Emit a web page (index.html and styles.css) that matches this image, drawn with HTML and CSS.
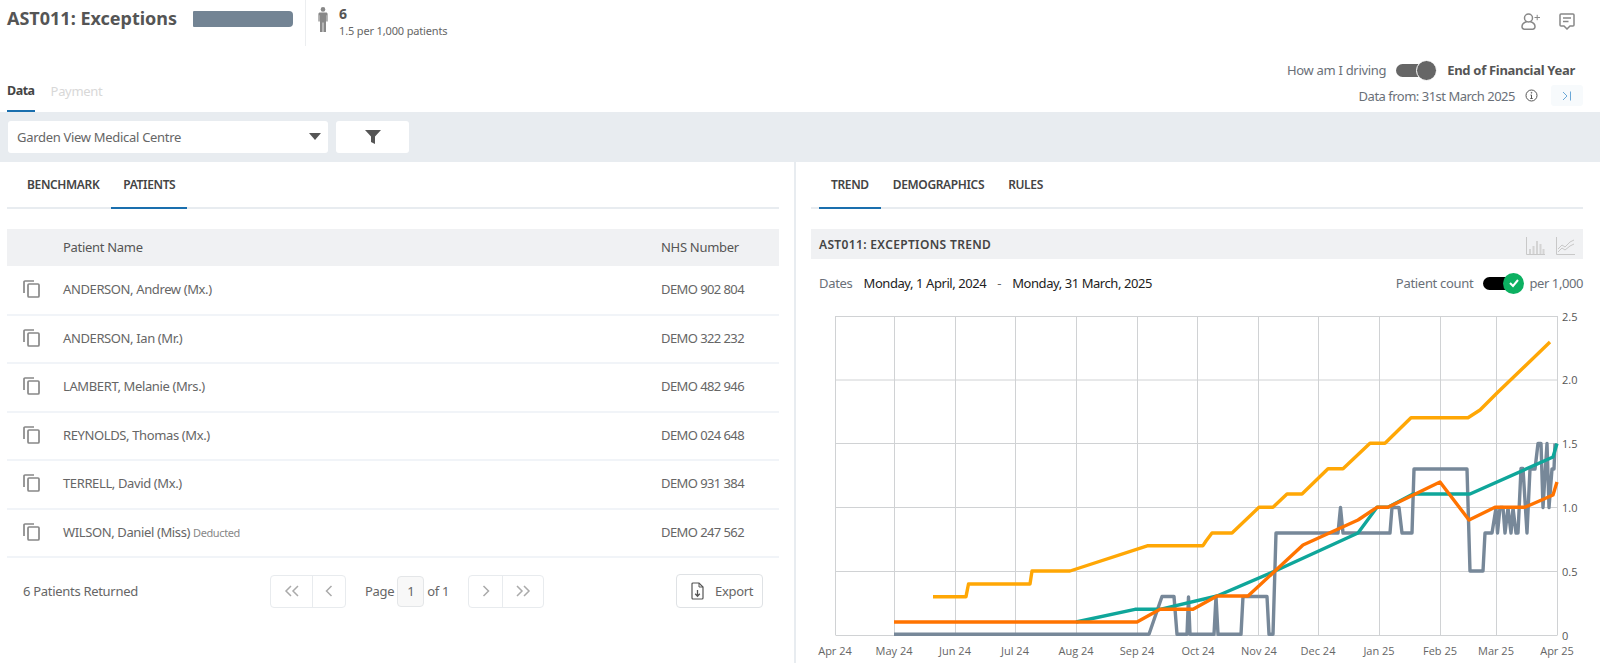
FILE: index.html
```html
<!DOCTYPE html>
<html lang="en">
<head>
<meta charset="utf-8">
<title>AST011: Exceptions</title>
<link rel="stylesheet" href="styles.css">
</head>
<body>
<header class="top">
  <div class="title-block">
    <h1 class="title">AST011: Exceptions</h1>
    <span class="redacted"></span>
  </div>
  <div class="count-block">
    <svg class="person" viewBox="0 0 10 25" width="10" height="25"><circle cx="5" cy="2.4" r="2.3"/><path d="M2 5.4h6c1 0 1.6.7 1.6 1.6v7.6H8.3V8.2H8V25H5.4V15.6H4.6V25H2V8.2h-.3v6.4H.4V7C.4 6.100 1 5.400 2 5.400z"/></svg>
    <div class="count-text">
      <strong class="count-num">6</strong>
      <span class="count-sub">1.5 per 1,000 patients</span>
    </div>
  </div>
  <div class="top-icons">
    <svg viewBox="0 0 20 17" width="20" height="17" class="ico-stroke"><circle cx="7.500" cy="5" r="4"/><path d="M6 8.500C2.500 9.500 1 11 1 13.500c0 2 1.500 2.800 3.500 2.800h6c2 0 3.500-.8 3.500-2.800 0-2.500-1.500-4-5-5"/><path d="M13.500 4.500h5.500M16.200 1.800v5.400" stroke-width="1"/></svg>
    <svg viewBox="0 0 16 17" width="16" height="17" class="ico-stroke"><path d="M2 1h12a1 1 0 0 1 1 1v10a1 1 0 0 1-1 1h-3l-3 3-3-3H2a1 1 0 0 1-1-1V2a1 1 0 0 1 1-1z"/><path d="M4 5h8M4 8.500h5.500"/></svg>
  </div>
</header>

<section class="subhead">
  <nav class="main-tabs">
    <a class="main-tab is-active">Data</a>
    <a class="main-tab is-muted">Payment</a>
  </nav>
  <div class="driving">
    <div class="driving-row">
      <span class="light">How am I driving</span>
      <span class="switch"><span class="switch-knob"></span></span>
      <strong class="driving-strong">End of Financial Year</strong>
    </div>
    <div class="data-row">
      <span class="light data-from">Data from: 31st March 2025</span>
      <svg viewBox="0 0 13 13" width="13" height="13" class="ico-info"><circle cx="6.500" cy="6.500" r="5.500"/><path d="M6.500 6v3.500M5.300 9.500h2.400M5.500 6h1" /><circle cx="6.500" cy="3.800" r=".4"/></svg>
      <span class="collapse-btn"><svg viewBox="0 0 10 10" width="10" height="10"><path d="M1 1l4 4-4 4M8.500 .5v9"/></svg></span>
    </div>
  </div>
</section>

<section class="filter-band">
  <div class="select">
    <span>Garden View Medical Centre</span>
    <span class="caret"></span>
  </div>
  <button class="filter-btn" type="button"><svg viewBox="0 0 16 14" width="16" height="14"><path d="M0 0h16l-6 6.500V14l-4-2V6.500z"/></svg></button>
</section>

<main class="panels">
  <section class="panel-left">
    <nav class="tabs">
      <a class="tab">BENCHMARK</a>
      <a class="tab is-active">PATIENTS</a>
    </nav>
    <table class="patients">
      <thead>
        <tr><th class="c-icon"></th><th class="c-name">Patient Name</th><th class="c-nhs">NHS Number</th></tr>
      </thead>
      <tbody>
        <tr><td><svg class="copy" viewBox="0 0 17 18" width="17" height="18"><rect x="5" y="4" width="11" height="13" rx="1"/><path d="M1 13V2a1 1 0 0 1 1-1h9"/></svg></td><td class="name">ANDERSON, Andrew (Mx.)</td><td class="nhs">DEMO 902 804</td></tr>
        <tr><td><svg class="copy" viewBox="0 0 17 18" width="17" height="18"><rect x="5" y="4" width="11" height="13" rx="1"/><path d="M1 13V2a1 1 0 0 1 1-1h9"/></svg></td><td class="name">ANDERSON, Ian (Mr.)</td><td class="nhs">DEMO 322 232</td></tr>
        <tr><td><svg class="copy" viewBox="0 0 17 18" width="17" height="18"><rect x="5" y="4" width="11" height="13" rx="1"/><path d="M1 13V2a1 1 0 0 1 1-1h9"/></svg></td><td class="name">LAMBERT, Melanie (Mrs.)</td><td class="nhs">DEMO 482 946</td></tr>
        <tr><td><svg class="copy" viewBox="0 0 17 18" width="17" height="18"><rect x="5" y="4" width="11" height="13" rx="1"/><path d="M1 13V2a1 1 0 0 1 1-1h9"/></svg></td><td class="name">REYNOLDS, Thomas (Mx.)</td><td class="nhs">DEMO 024 648</td></tr>
        <tr><td><svg class="copy" viewBox="0 0 17 18" width="17" height="18"><rect x="5" y="4" width="11" height="13" rx="1"/><path d="M1 13V2a1 1 0 0 1 1-1h9"/></svg></td><td class="name">TERRELL, David (Mx.)</td><td class="nhs">DEMO 931 384</td></tr>
        <tr><td><svg class="copy" viewBox="0 0 17 18" width="17" height="18"><rect x="5" y="4" width="11" height="13" rx="1"/><path d="M1 13V2a1 1 0 0 1 1-1h9"/></svg></td><td class="name">WILSON, Daniel (Miss) <small class="deducted">Deducted</small></td><td class="nhs">DEMO 247 562</td></tr>
      </tbody>
    </table>
    <footer class="table-foot">
      <span class="returned">6 Patients Returned</span>
      <div class="pager">
        <div class="pager-group">
          <span class="pg-btn pg-wide"><svg viewBox="0 0 16 12" width="16" height="12"><path d="M7 1L2 6l5 5M14 1L9 6l5 5"/></svg></span>
          <span class="pg-btn"><svg viewBox="0 0 8 12" width="8" height="12"><path d="M6.500 1L1.500 6l5 5"/></svg></span>
        </div>
        <span class="pg-label pg-label-l">Page</span>
        <span class="pg-input">1</span>
        <span class="pg-label pg-label-r">of 1</span>
        <div class="pager-group">
          <span class="pg-btn"><svg viewBox="0 0 8 12" width="8" height="12"><path d="M1.500 1l5 5-5 5"/></svg></span>
          <span class="pg-btn pg-wide"><svg viewBox="0 0 16 12" width="16" height="12"><path d="M2 1l5 5-5 5M9 1l5 5-5 5"/></svg></span>
        </div>
      </div>
      <button class="export" type="button">
        <svg viewBox="0 0 13 18" width="13" height="18"><path d="M2 1h6l4 4v11a1 1 0 0 1-1 1H2a1 1 0 0 1-1-1V2a1 1 0 0 1 1-1z"/><path d="M8 1v4h4" stroke-width="1"/><path d="M6.500 8v6M4.200 11.800l2.300 2.400 2.300-2.400" stroke-width="1.300"/></svg>
        <span>Export</span>
      </button>
    </footer>
  </section>

  <section class="panel-right">
    <nav class="tabs tabs-right">
      <a class="tab is-active">TREND</a>
      <a class="tab">DEMOGRAPHICS</a>
      <a class="tab">RULES</a>
    </nav>
    <div class="chart-head">
      <h2 class="chart-title">AST011: EXCEPTIONS TREND</h2>
      <div class="chart-icons">
        <svg viewBox="0 0 19 18" width="19" height="18"><path d="M.5 0v17.500H19" fill="none"/><path d="M3 17v-5h2v5zM6.500 17V9h2v8zM10 17V4h2v13zM13.500 17V7h2v10zM16.500 17v-5h2v5z" class="bars"/></svg>
        <svg viewBox="0 0 19 18" width="19" height="18"><path d="M.5 0v17.500H19M2 12l4-4 3 2 5-5 4-2M2 15l4-4 3 2 5-4 4-2" fill="none"/></svg>
      </div>
    </div>
    <div class="dates-row">
      <span class="dates-label">Dates</span>
      <span class="date">Monday, 1 April, 2024</span>
      <span class="date-sep">-</span>
      <span class="date">Monday, 31 March, 2025</span>
      <div class="count-toggle">
        <span class="light">Patient count</span>
        <span class="check-switch"><span class="check-knob"><svg viewBox="0 0 12 10" width="12" height="10"><path d="M2 5l3 3 5-6"/></svg></span></span>
        <span class="light per-label">per 1,000</span>
      </div>
    </div>
    <svg class="chart" viewBox="796 297 804 366" width="804" height="366">
      <g class="grid">
        <path d="M835.500 316.500H1557.500M835.500 380H1557.500M835.500 443.500H1557.500M835.500 507.500H1557.500M835.500 571.500H1557.500M835.500 635.500H1557.500"/>
        <path d="M835.500 316V635M894.500 316V635M955.500 316V635M1015.500 316V635M1076.500 316V635M1137.500 316V635M1197.500 316V635M1258.500 316V635M1318.500 316V635M1379.500 316V635M1440.500 316V635M1496.500 316V635M1557.500 316V635"/>
      </g>
      <g class="y-labels">
        <text x="1562" y="321">2.5</text>
        <text x="1562" y="384">2.0</text>
        <text x="1562" y="448">1.5</text>
        <text x="1562" y="512">1.0</text>
        <text x="1562" y="576">0.5</text>
        <text x="1562" y="640">0</text>
      </g>
      <g class="x-labels">
        <text x="835" y="655">Apr 24</text>
        <text x="894" y="655">May 24</text>
        <text x="955" y="655">Jun 24</text>
        <text x="1015" y="655">Jul 24</text>
        <text x="1076" y="655">Aug 24</text>
        <text x="1137" y="655">Sep 24</text>
        <text x="1198" y="655">Oct 24</text>
        <text x="1259" y="655">Nov 24</text>
        <text x="1318" y="655">Dec 24</text>
        <text x="1379" y="655">Jan 25</text>
        <text x="1440" y="655">Feb 25</text>
        <text x="1496" y="655">Mar 25</text>
        <text x="1557" y="655">Apr 25</text>
      </g>
      <polyline class="line line-yellow" points="933,596.700 966,596.700 968.500,584 1030,584 1032,571 1070,571 1148,545.700 1203,545.700 1206,541 1212,533 1232,533 1259,507.300 1273,507.300 1287,494 1302,494 1328,468.700 1343,468.700 1370,443.300 1385,443.300 1411,417.700 1468,417.700 1480,410 1497,393 1550,342"/>
      <polyline class="line line-grey" points="894,634.300 1149,634.300 1162,596.500 1174,596.500 1177,634.300 1187,634.300 1188.500,597 1190,634.300 1214,634.300 1216,596.500 1218,634.300 1241,634.300 1243,596.500 1267,596.500 1269,634.300 1273,634.300 1276,533 1338,533 1340.500,507.500 1343,533 1390,533 1392,507.500 1399,507.500 1402,533 1412,533 1414,469 1467,469 1470,571 1483,571 1485,533 1492,533 1496,508 1497.500,533 1500,507.500 1503,507.500 1505,533 1508,508 1511,533 1513,508 1516,533 1518,533 1521,468.500 1523,468.500 1527,533 1530,469 1535,469 1538,443.500 1541,443.500 1543,507.500 1547,443.500 1549,507.500 1552,469 1554,469 1555,443.500"/>
      <polyline class="line line-teal" points="1076,622 1135,609.300 1160,609.300 1217,596 1275,571 1358,533 1377,507.300 1388,507.300 1413,494 1470,494 1553,457 1557,443.500"/>
      <polyline class="line line-orange" points="894,622 1137,622 1160,609.300 1193,609.300 1217,596 1248,596 1275,571 1303,545 1358,520 1377,507.300 1388,507.300 1440,482 1469,520 1495,507.300 1525,507.300 1553,495 1557,482"/>
    </svg>
  </section>
</main>
</body>
</html>
```

FILE: styles.css
```css
* { box-sizing: border-box; }
html, body { margin: 0; height: 663px; overflow: hidden; }
body {
  font-family: "Noto Sans", "Liberation Sans", sans-serif;
  font-size: 13px;
  letter-spacing: -0.3px;
  color: #666;
  background: #fff;
}

/* top */
.top { display: flex; height: 46px; padding-left: 7px; }
.title-block { display: flex; align-items: flex-start; width: 299px; border-right: 1px solid #eceef0; }
.title { margin: 5px 0 0; font-size: 18px; line-height: 26px; font-weight: 700; color: #555; letter-spacing: 0; width: 186px; }
.redacted { width: 100px; height: 16px; margin-top: 11px; background: #738494; border-radius: 1px 4px 4px 1px; }
.count-block { display: flex; gap: 11px; padding: 7px 0 0 12px; }
.person { fill: #888; }
.count-text { display: flex; flex-direction: column; }
.count-num { font-size: 14px; line-height: 14px; color: #555; }
.count-sub { font-size: 11px; line-height: 14px; margin-top: 3px; letter-spacing: -0.15px; }
.top-icons { margin-left: auto; display: flex; gap: 18px; padding: 13px 25px 0 0; }
.ico-stroke { fill: none; stroke: #888; stroke-width: 1.500; }

/* sub head */
.subhead { display: flex; justify-content: space-between; height: 66px; padding: 0 17px 0 7px; }
.main-tabs { display: flex; gap: 16px; align-self: flex-end; }
.main-tab { font-size: 13px; line-height: 20px; height: 33px; padding-top: 2px; }
.main-tab.is-active { font-size: 12.500px; letter-spacing: -0.5px; font-weight: 700; color: #444; border-bottom: 2px solid #1a6fae; }
.main-tab.is-muted { color: #d8d8d8; }
.driving { display: flex; flex-direction: column; align-items: flex-end; }
.driving-row { display: flex; align-items: center; height: 20px; margin: 14px 8px 0 0; }
.light { color: #6a7078; }
.switch { position: relative; width: 30px; height: 13px; margin: 0 21px 0 10px; background: #666; border-radius: 7px; }
.switch-knob { position: absolute; right: -11px; top: -4px; width: 21px; height: 21px; border-radius: 50%; background: #666; border: 1px solid #fff; }
.driving-strong { color: #555; }
.data-row { display: flex; align-items: center; height: 21px; margin-top: 5px; }
.data-from { letter-spacing: -0.5px; }
.ico-info { margin-left: 10px; fill: none; stroke: #555; stroke-width: 1; }
.collapse-btn { display: flex; align-items: center; justify-content: center; width: 32px; height: 21px; margin-left: 13px; background: #f7fafc; border-radius: 3px; }
.collapse-btn svg { fill: none; stroke: #6ba8d8; stroke-width: 1; }

/* filter */
.filter-band { display: flex; gap: 8px; height: 50px; padding: 9px 0 0 8px; background: #e8ecf0; }
.select { display: flex; align-items: center; justify-content: space-between; width: 320px; height: 32px; padding: 0 7px 0 9px; background: #fff; border-radius: 3px; }
.caret { width: 0; height: 0; border-left: 6px solid transparent; border-right: 6px solid transparent; border-top: 7px solid #555; margin-top: -2px; }
.filter-btn { display: flex; align-items: center; justify-content: center; width: 73px; height: 32px; padding: 0; border: 0; background: #fff; border-radius: 3px; }
.filter-btn svg { fill: #555; }

/* panels */
.panels { display: grid; grid-template-columns: 794px minmax(0, 1fr); height: 501px; }
.panel-left { padding: 0 15px 0 7px; }
.panel-right { padding: 0 17px 0 15px; border-left: 2px solid #e8ecf0; }
.tabs { display: flex; height: 47px; border-bottom: 2px solid #e8ecf0; padding-left: 8px; }
.tab { height: 47px; padding: 13px 12px 0; font-size: 12px; line-height: 20px; font-weight: 600; color: #444; letter-spacing: -0.36px; }
.tab.is-active { border-bottom: 2px solid #1a6fae; }

/* table */
.patients { width: 100%; margin-top: 20px; border-collapse: collapse; table-layout: fixed; }
.patients th { height: 37px; padding: 0 0 2px; text-align: left; font-weight: 400; color: #555; background: #f0f1f3; }
.patients td { height: 48.500px; padding: 0 0 2px; border-bottom: 2px solid #f1f4f8; }
.c-icon { width: 56px; }
.c-nhs { width: 118px; }
.name { letter-spacing: -0.38px; }
.nhs { letter-spacing: -0.58px; }
.copy { display: block; margin-left: 16px; fill: none; stroke: #888; stroke-width: 1.700; }
.deducted { font-size: 11px; color: #888; }
.table-foot { display: grid; grid-template-columns: 247px 1fr auto; align-items: center; height: 34px; margin-top: 16px; padding: 0 16px; }
.pager { display: flex; align-items: center; }
.pager-group { display: flex; height: 33px; border: 1px solid #e8ebee; border-radius: 4px; }
.pg-btn { display: flex; align-items: center; justify-content: center; width: 33px; border-left: 1px solid #e8ebee; }
.pg-btn:first-child { border-left: 0; }
.pg-wide { width: 41px; }
.pg-btn svg { fill: none; stroke: #aaa; stroke-width: 1.500; }
.pg-label-l { margin-left: 19px; }
.pg-label-r { margin-right: 19px; }
.pg-input { display: flex; align-items: center; justify-content: center; width: 27px; height: 31px; margin: 0 3px; border: 1px solid #e4e6e8; border-radius: 4px; background: #f8f8f8; }
.export { display: flex; align-items: center; gap: 11px; width: 87px; height: 34px; padding: 0 0 0 14px; border: 1px solid #dfe2e5; border-radius: 4px; background: #fff; font: inherit; letter-spacing: inherit; color: #666; }
.export svg { fill: none; stroke: #555; stroke-width: 1.200; }

/* chart */
.chart-head { display: flex; align-items: center; justify-content: space-between; height: 30px; margin-top: 20px; padding: 0 8px; background: #f0f1f3; }
.chart-title { margin: 0; font-size: 12px; font-weight: 600; color: #444; letter-spacing: 0.35px; }
.chart-icons { display: flex; gap: 11px; margin-top: 4px; }
.chart-icons svg { stroke: #c8c8c8; stroke-width: 1; }
.bars { fill: #d4d4d4; stroke: none; }
.dates-row { display: flex; align-items: center; height: 38px; padding: 10px 0 0 8px; }
.dates-label { color: #6a7078; margin-right: 11px; }
.date { color: #222; letter-spacing: -0.43px; }
.date-sep { margin: 0 11px; }
.count-toggle { display: flex; align-items: center; margin-left: auto; }
.per-label { letter-spacing: -0.42px; }
.check-switch { position: relative; width: 29px; height: 13px; margin: 0 17px 0 10px; background: #000; border-radius: 7px; }
.check-knob { position: absolute; right: -12px; top: -4px; display: flex; align-items: center; justify-content: center; width: 21px; height: 21px; background: #0cb061; border-radius: 50%; }
.check-knob svg { fill: none; stroke: #fff; stroke-width: 2; }
.chart { display: block; margin-left: -15px; font-family: "Open Sans", sans-serif; font-size: 11px; letter-spacing: 0; }
.grid path { fill: none; stroke: #d0d2d4; stroke-width: 1; }
.y-labels text { fill: #555; font-size: 11px; }
.x-labels text { fill: #666; text-anchor: middle; }
.line { fill: none; stroke-linejoin: round; stroke-linecap: butt; stroke-width: 3.400; }
.line-yellow { stroke: #ffa705; }
.line-grey { stroke: #778899; }
.line-teal { stroke: #0fa69a; }
.line-orange { stroke: #ff7300; }
```
